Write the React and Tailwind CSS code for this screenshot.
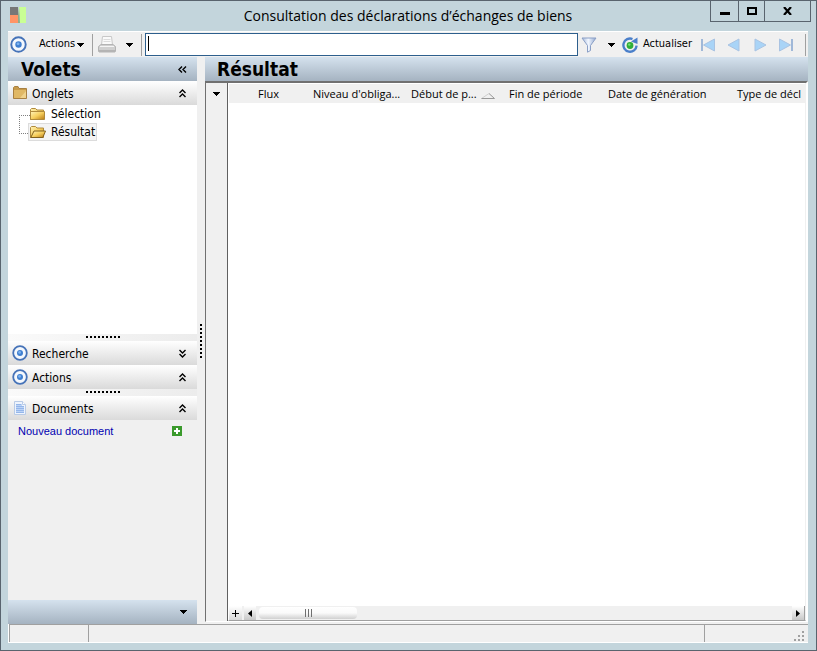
import React, { useState } from "react";

const columns = [
  { label: "Flux", cell: "w-[79px] pl-[29px]" },
  { label: "Niveau d'obliga...", cell: "w-[98px] pl-[5px]" },
  { label: "Début de p...", cell: "w-[98px] pl-[5px]", sorted: true },
  { label: "Fin de période", cell: "w-[99px] pl-[5px]" },
  { label: "Date de génération", cell: "w-[129px] pl-[5px]" },
  { label: "Type de décl", cell: "pl-[5px]" },
];

const TargetIcon = ({ className }) => (
  <svg className={className} viewBox="0 0 16 16" aria-hidden="true">
    <circle cx="8" cy="8" r="6.8" fill="#f4f8fd" stroke="#4673b8" strokeWidth="1.8" />
    <circle cx="8" cy="8" r="3" fill="#3f7fd0" />
    <circle cx="7.6" cy="7.4" r="1.4" fill="#7db2ee" />
  </svg>
);

const FolderIcon = ({ open = false }) => (
  <svg className="h-4 w-4 shrink-0" viewBox="0 0 16 16" aria-hidden="true">
    <defs>
      <linearGradient id="folder" x1="0" y1="0" x2="1" y2="1">
        <stop offset="0" stopColor="#fff3b8" />
        <stop offset="0.5" stopColor="#f6cf5e" />
        <stop offset="1" stopColor="#b87a14" />
      </linearGradient>
    </defs>
    <path d="M.5 3.5 L1.5 2.5 H5.5 L7 4 H13.5 V13.5 H.5Z" fill="url(#folder)" stroke="#b08a3c" />
    {open ? (
      <path d="M.8 13.5 L4 7 H15.5 L12.8 13.5Z" fill="url(#folder)" stroke="#80601f" />
    ) : (
      <path d="M.5 5.5 H14.5 V13.5 H.5Z" fill="url(#folder)" stroke="#b08a3c" />
    )}
  </svg>
);

const TabsFolderIcon = () => (
  <svg className="h-4 w-4 shrink-0" viewBox="0 0 16 16" aria-hidden="true">
    <path d="M1.5 2.5 L2.5 1.5 H6 L7 3.5 H14.5 V13.5 H1.5Z" fill="#c79a4a" stroke="#a88042" />
    <path d="M2 5 H14 V13 H2Z" fill="#e0b865" />
    <path d="M8 13 L14 6 V13Z" fill="#f0d28c" />
  </svg>
);

const DocumentIcon = () => (
  <svg className="h-4 w-4 shrink-0" viewBox="0 0 16 16" aria-hidden="true">
    <path d="M2.5 1.5 H10.5 L13.5 4.5 V14.5 H2.5Z" fill="#eef4fd" stroke="#b9cbe6" />
    <path d="M4 4 H10 V6 H12 V13 H4Z" fill="#bcd3f6" />
    <path d="M10.5 1.5 V4.5 H13.5" fill="#fff" stroke="#b9cbe6" />
    <path d="M4 4.5 H9 M4 6.5 H12 M4 8.5 H12 M4 10.5 H12 M4 12.5 H12" stroke="#94b6ea" />
  </svg>
);

const PrinterIcon = () => (
  <svg className="h-[18px] w-[18px]" viewBox="0 0 18 18" aria-hidden="true">
    <path d="M4.5 .5 H13.5 L14.5 9 H3.5Z" fill="#fafafa" stroke="#c8c8c8" />
    <path d="M5.5 3.5 H12.5 M5.5 5.5 H12.5" stroke="#dcdcdc" />
    <path d="M.5 10.5 L3 8.5 H15 L17.5 10.5 V15.5 H.5Z" fill="#d0d0d0" stroke="#b4b4b4" />
    <path d="M2 10.5 H16" stroke="#f5f5f5" />
    <path d="M1 14 H17 V16.5 H1Z" fill="#b4b4b4" />
  </svg>
);

const FilterIcon = () => (
  <svg className="h-4 w-4" viewBox="0 0 16 16" aria-hidden="true">
    <defs>
      <linearGradient id="funnel" x1="0" x2="1">
        <stop offset="0" stopColor="#a3b7da" />
        <stop offset="0.45" stopColor="#f2f7ff" />
        <stop offset="1" stopColor="#8fa6cf" />
      </linearGradient>
    </defs>
    <path d="M1 1 H15 L9.5 8.5 V13.5 L6.5 15.2 V8.5Z" fill="url(#funnel)" stroke="#8a9fc6" />
  </svg>
);

const RefreshIcon = () => (
  <svg className="h-4 w-4" viewBox="0 0 16 16" aria-hidden="true">
    <path d="M10.5 2 A6.6 6.6 0 1 0 14.6 8.6" fill="none" stroke="#4a7fca" strokeWidth="2.4" />
    <path d="M9 4.5 L15.5 .5 L15.5 7Z" fill="#4a7fca" />
    <circle cx="8" cy="8.5" r="3.4" fill="#2fae38" />
    <circle cx="7.3" cy="7.6" r="1.2" fill="#7bdc7b" />
  </svg>
);

const NavIcon = ({ bar = false, back = false }) => (
  <svg className="h-4 w-4" viewBox="0 0 16 16" aria-hidden="true">
    <g transform={back ? "matrix(-1 0 0 1 16 0)" : undefined}>
      <path d={bar ? "M1.5 2 L12.5 8 L1.5 14Z" : "M3 2 L14 8 L3 14Z"} fill="#a9d4f7" stroke="#a9c3e2" />
      {bar && <path d="M14 2 V14" stroke="#a0b8d8" strokeWidth="2" />}
    </g>
  </svg>
);

const DownArrow = () => (
  <svg className="h-1 w-[7px]" viewBox="0 0 7 4" shapeRendering="crispEdges" aria-hidden="true">
    <path d="M0 0 H7 L3.5 4Z" />
  </svg>
);

const Chevrons = ({ className = "" }) => (
  <svg className={`h-[9px] w-[9px] ${className}`} viewBox="0 0 9 9" aria-hidden="true">
    <path d="M1.5 4 L4.5 1 L7.5 4 M1.5 8 L4.5 5 L7.5 8" fill="none" stroke="#000" strokeWidth="1.4" />
  </svg>
);

const Grip = () => (
  <div className="flex h-[7px] justify-center bg-gradient-to-r from-[#fafafa] to-[#ececec] pt-0.5">
    <div className="h-0.5 w-[34px] bg-[repeating-linear-gradient(90deg,#000_0_2px,transparent_2px_4px)]" />
  </div>
);

const PaneHeader = ({ icon, title, expanded, onToggle }) => (
  <button
    type="button"
    onClick={onToggle}
    aria-expanded={expanded}
    className="flex h-6 w-full shrink-0 items-center gap-1 bg-gradient-to-b from-white to-[#dadada] pr-[10px] pl-1 text-left text-[12px]"
  >
    {icon}
    <span className="flex-1 pt-px">{title}</span>
    <Chevrons className={expanded ? "" : "rotate-180"} />
  </button>
);

const Separator = () => <div className="h-[22px] w-px bg-[#a0a0a0]" />;

const App = () => {
  const [query, setQuery] = useState("");
  const [panes, setPanes] = useState({ tabs: true, search: false, actions: true, docs: true });

  const toggle = (name) => setPanes({ ...panes, [name]: !panes[name] });

  return (
    <div className="flex h-screen flex-col border border-[#59646e] bg-[#c3d5dc] pr-2 pb-[7px] pl-[7px] font-['DejaVu_Sans_Condensed','DejaVu_Sans',sans-serif] text-[12px] text-black">
      {/* Title bar */}
      <header className="flex h-[30px] shrink-0 items-start">
        <svg className="mt-[6px] ml-0.5 h-4 w-4" viewBox="0 0 16 16" aria-hidden="true">
          <path d="M0 0 H8 V8 H0Z" fill="#777" />
          <path d="M0 8 H8 V16 H0Z" fill="#ff9466" />
          <path d="M9 0 H16 V16 H10Z" fill="#c9ff94" />
          <path d="M8 8 L9 0 L10 16 H8Z" fill="#8fae8a" />
        </svg>
        <h1 className="flex-1 pt-1 pl-20 text-center font-['Open_Sans',sans-serif] text-[14px] leading-[22px]">
          Consultation des déclarations d’échanges de biens
        </h1>
        <div className="-mr-[3px] flex h-[21px] divide-x divide-[#59646e] border-x border-b border-[#59646e]">
          <button type="button" aria-label="Réduire" className="flex w-7 items-center justify-center pt-1">
            <span className="h-[3px] w-[10px] bg-black" />
          </button>
          <button type="button" aria-label="Agrandir" className="flex w-[26px] items-center justify-center">
            <span className="h-2 w-[10px] border-2 border-black" />
          </button>
          <button type="button" aria-label="Fermer" className="flex w-[45px] items-center justify-center">
            <svg className="h-2 w-[9px]" viewBox="0 0 9 8" aria-hidden="true">
              <path d="M1 0 L8 8 M8 0 L1 8" stroke="#000" strokeWidth="2.2" />
            </svg>
          </button>
        </div>
      </header>

      {/* Toolbar */}
      <div className="flex h-[26px] shrink-0 items-center border-t border-white bg-[#f0f0f0] text-[11px]">
        <TargetIcon className="ml-[2px] h-[17px] w-[17px] shrink-0" />
        <button type="button" className="mr-2 ml-3 flex items-center gap-0.5">
          Actions <DownArrow />
        </button>
        <Separator />
        <button type="button" aria-label="Imprimer" className="mr-[10px] ml-[5px]">
          <PrinterIcon />
        </button>
        <button type="button" aria-label="Options d'impression" className="mr-2">
          <DownArrow />
        </button>
        <Separator />
        <div className="relative ml-[3px] h-[23px] min-w-0 flex-1">
          <input
            type="text"
            aria-label="Recherche rapide"
            value={query}
            onChange={(e) => setQuery(e.target.value)}
            className="h-full w-full border border-[#2d5f8d] bg-white px-0.5 text-[14px] outline-none"
          />
          {query === "" && <span className="pointer-events-none absolute top-[3px] left-[3px] h-[15px] w-px bg-black" />}
        </div>
        <button type="button" aria-label="Filtrer" className="mr-[11px] ml-[3px]">
          <FilterIcon />
        </button>
        <button type="button" aria-label="Options du filtre" className="mr-[7px]">
          <DownArrow />
        </button>
        <button type="button" className="mr-2 flex items-center gap-[5px]">
          <RefreshIcon /> Actualiser
        </button>
        <div className="mr-[11px] flex gap-[10px]">
          <button type="button" aria-label="Premier"><NavIcon bar back /></button>
          <button type="button" aria-label="Précédent"><NavIcon back /></button>
          <button type="button" aria-label="Suivant"><NavIcon /></button>
          <button type="button" aria-label="Dernier"><NavIcon bar /></button>
        </div>
        <Separator />
        <div className="w-0.5" />
      </div>

      <div className="flex min-h-0 flex-1 bg-[#f0f0f0]">
        {/* Left panes */}
        <aside className="flex w-[189px] shrink-0 flex-col">
          <div className="flex h-6 shrink-0 items-center justify-between bg-gradient-to-b from-[#d5e2ee] to-[#a5b3c1] pr-[10px] pl-[13px]">
            <h2 className="text-[19px] leading-6 font-bold">Volets</h2>
            <button type="button" aria-label="Masquer les volets">
              <Chevrons className="-rotate-90" />
            </button>
          </div>

          <PaneHeader icon={<TabsFolderIcon />} title="Onglets" expanded={panes.tabs} onToggle={() => toggle("tabs")} />
          {panes.tabs && (
            <nav className="flex h-[229px] bg-white">
              <div className="mt-[10px] ml-[11px] h-[19px] w-[11px] border-y border-l border-dotted border-[#808080]" />
              <ul>
                <li className="flex h-[18px] items-center">
                  <a href="#selection" className="flex items-center gap-[5px] pr-1">
                    <FolderIcon /> Sélection
                  </a>
                </li>
                <li className="flex h-[18px] items-center">
                  <a
                    href="#resultat"
                    className="-ml-0.5 flex h-[18px] items-center gap-[5px] border border-[#dcdcdc] bg-[#f4f4f4] pr-px pl-px"
                  >
                    <FolderIcon open /> Résultat
                  </a>
                </li>
              </ul>
            </nav>
          )}
          <Grip />
          <PaneHeader icon={<TargetIcon className="h-4 w-4" />} title="Recherche" expanded={panes.search} onToggle={() => toggle("search")} />
          <PaneHeader icon={<TargetIcon className="h-4 w-4" />} title="Actions" expanded={panes.actions} onToggle={() => toggle("actions")} />
          <Grip />
          <PaneHeader icon={<DocumentIcon />} title="Documents" expanded={panes.docs} onToggle={() => toggle("docs")} />
          {panes.docs && (
            <a href="#nouveau" className="flex h-[22px] items-center justify-between pr-[15px] pl-[10px] font-['Liberation_Sans',sans-serif] text-[11px] text-[#0000b0]">
              Nouveau document
              <svg className="h-[10px] w-[10px]" viewBox="0 0 10 10" aria-hidden="true">
                <path d="M0 0 H10 V10 H0Z" fill="#3a9a2c" />
                <path d="M5 2 V8 M2 5 H8" stroke="#fff" strokeWidth="2" />
              </svg>
            </a>
          )}
          <div className="mt-auto flex h-6 shrink-0 items-center justify-end bg-gradient-to-b from-[#d5e2ee] to-[#a5b3c1] pr-[10px]">
            <button type="button" aria-label="Configurer les volets" className="flex h-1"><DownArrow /></button>
          </div>
        </aside>

        {/* Splitter */}
        <div className="flex w-2 shrink-0 items-center justify-center">
          <div className="h-[34px] w-0.5 bg-[repeating-linear-gradient(180deg,#000_0_2px,transparent_2px_4px)]" />
        </div>

        {/* Result grid */}
        <main className="flex min-w-0 flex-1 flex-col pb-0.5">
          <h2 className="h-6 shrink-0 bg-gradient-to-b from-[#d5e2ee] to-[#a5b3c1] pl-3 text-[19px] leading-6 font-bold">
            Résultat
          </h2>
          <div className="flex min-h-0 flex-1 border-t-2 border-r-2 border-b border-l border-t-[#707070] border-r-white border-b-white border-l-[#707070]">
            <div className="flex w-[22px] shrink-0 justify-center border-r border-[#606060] pt-[9px]">
              <button type="button" aria-label="Choisir les colonnes" className="flex h-1">
                <DownArrow />
              </button>
            </div>
            <div className="flex min-w-0 flex-1 flex-col border-r border-b border-l border-r-[#f0f0f0] border-b-[#a0a0a0] border-l-white bg-white pt-px">
              <table className="w-full table-fixed border-collapse bg-[#f0f0f0] font-['Open_Sans',sans-serif]">
                <thead>
                  <tr>
                    {columns.map((col) => (
                      <th key={col.label} className={`pt-px pr-0 pb-0 text-left text-[11px] leading-[18px] font-normal whitespace-nowrap ${col.cell}`}>
                        <span className="flex items-center gap-1">
                          {col.label}
                          {col.sorted && (
                            <svg className="mt-1 h-[6px] w-[14px]" viewBox="0 0 14 6" aria-hidden="true">
                              <path d="M.5 5.5 L8 .5" stroke="#d0d0d0" fill="none" />
                              <path d="M8 .5 L13.5 5.5 H.5" stroke="#989898" fill="none" />
                            </svg>
                          )}
                        </span>
                      </th>
                    ))}
                  </tr>
                </thead>
                <tbody />
              </table>

              {/* Horizontal scroll bar */}
              <div className="mt-auto flex h-[14px] shrink-0 items-stretch bg-[#f0f0f0]">
                <button type="button" aria-label="Ajouter" className="flex w-[13px] items-center justify-center bg-gradient-to-b from-white to-[#d8d8d8]">
                  <svg className="h-[7px] w-[7px]" viewBox="0 0 7 7" aria-hidden="true">
                    <path d="M3.5 0 V7 M0 3.5 H7" stroke="#000" />
                  </svg>
                </button>
                <button type="button" aria-label="Défiler à gauche" className="ml-0.5 flex w-3 items-center justify-center bg-gradient-to-b from-white to-[#c8c8c8]">
                  <svg className="h-[7px] w-1" viewBox="0 0 4 7" aria-hidden="true">
                    <path d="M4 0 V7 L0 3.5Z" />
                  </svg>
                </button>
                <div className="flex flex-1 items-center pl-[3px]">
                  <div className="flex h-3 w-[98px] items-center justify-center rounded-sm bg-gradient-to-b from-white via-[#fafafa] to-[#d0d0d0]">
                    <div className="h-2 w-[7px] bg-[repeating-linear-gradient(90deg,#707070_0_1px,transparent_1px_3px)]" />
                  </div>
                </div>
                <button type="button" aria-label="Défiler à droite" className="flex w-[13px] items-center justify-center border-r border-[#a0a0a0] bg-gradient-to-b from-white to-[#c8c8c8]">
                  <svg className="h-[7px] w-1" viewBox="0 0 4 7" aria-hidden="true">
                    <path d="M0 0 V7 L4 3.5Z" />
                  </svg>
                </button>
              </div>
            </div>
          </div>
        </main>
      </div>

      {/* Status bar */}
      <footer className="flex h-[19px] shrink-0 border-b border-l border-white bg-[#f0f0f0]">
        <div className="w-[79px] border-t border-l border-[#a0a0a0]" />
        <div className="flex-1 border-t border-l border-[#a0a0a0]" />
        <div className="flex w-[104px] items-end justify-end border-t border-l border-[#a0a0a0] pr-[3px]">
          <svg className="h-[11px] w-[11px]" viewBox="0 0 11 11" aria-hidden="true">
            <path d="M8 0h2v2h-2z M8 4h2v2h-2z M8 8h2v2h-2z M4 4h2v2h-2z M4 8h2v2h-2z M0 8h2v2h-2z" fill="#a0a0a0" />
          </svg>
        </div>
      </footer>
    </div>
  );
};

export default App;
